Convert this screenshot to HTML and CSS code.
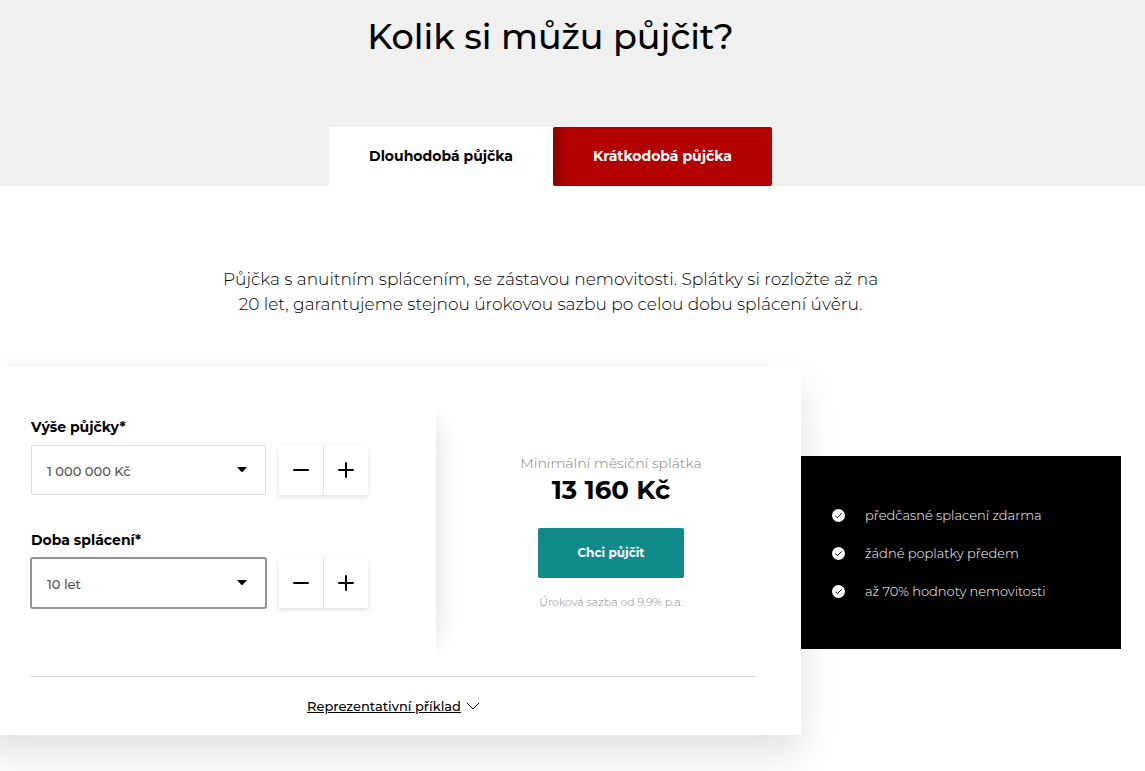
FILE: index.html
```html
<!DOCTYPE html>
<html lang="cs">

<head>
    <meta charset="UTF-8">
    <meta name="viewport" content="width=device-width, initial-scale=1">
    <title>Kolik si můžu půjčit?</title>
    <link rel="stylesheet" href="styles.css">
</head>

<body>
    <header class="intro">
        <h1>Kolik si můžu půjčit?</h1>
        <div class="tabs" role="tablist">
            <button type="button" class="tab tab-active" role="tab" aria-selected="true">Dlouhodobá půjčka</button>
            <button type="button" class="tab" role="tab" aria-selected="false">Krátkodobá půjčka</button>
        </div>
    </header>

    <main class="content">
        <p class="lead">Půjčka s anuitním splácením, se zástavou nemovitosti. Splátky si rozložte až na 20&nbsp;let, garantujeme stejnou úrokovou sazbu po celou dobu splácení úvěru.</p>

        <div class="calculator">
            <form class="card">
                <div class="card-main">
                    <div class="fields">
                        <div class="field">
                            <label for="amount">Výše půjčky*</label>
                            <div class="field-row">
                                <div class="select-box">
                                    <select id="amount">
                                        <option>1 000 000 Kč</option>
                                    </select>
                                    <svg class="caret" width="10" height="5" viewBox="0 0 10 5"><path d="M0 0h10L6 4.6q-1 .8-2 0z"/></svg>
                                </div>
                                <div class="stepper">
                                    <button type="button" aria-label="Snížit částku"><svg width="16" height="16" viewBox="0 0 16 16"><path d="M1 8h14"/></svg></button>
                                    <button type="button" aria-label="Zvýšit částku"><svg width="16" height="16" viewBox="0 0 16 16"><path d="M1 8h14M8 1v14"/></svg></button>
                                </div>
                            </div>
                        </div>
                        <div class="field">
                            <label for="period">Doba splácení*</label>
                            <div class="field-row">
                                <div class="select-box select-focused">
                                    <select id="period">
                                        <option>10 let</option>
                                    </select>
                                    <svg class="caret" width="10" height="5" viewBox="0 0 10 5"><path d="M0 0h10L6 4.6q-1 .8-2 0z"/></svg>
                                </div>
                                <div class="stepper">
                                    <button type="button" aria-label="Zkrátit dobu"><svg width="16" height="16" viewBox="0 0 16 16"><path d="M1 8h14"/></svg></button>
                                    <button type="button" aria-label="Prodloužit dobu"><svg width="16" height="16" viewBox="0 0 16 16"><path d="M1 8h14M8 1v14"/></svg></button>
                                </div>
                            </div>
                        </div>
                    </div>

                    <div class="result">
                        <div class="result-label">Minimální měsíční splátka</div>
                        <div class="result-price">13 160 Kč</div>
                        <button type="button" class="btn">Chci půjčit</button>
                        <div class="result-note">Úroková sazba od 9.9% p.a.</div>
                    </div>
                </div>

                <div class="card-footer">
                    <a href="#priklad">Reprezentativní příklad</a>
                    <svg width="14" height="8" viewBox="0 0 14 8"><path d="M.8.8L7 7l6.2-6.2"/></svg>
                </div>
            </form>

            <ul class="benefits">
                <li><svg width="13" height="13" viewBox="0 0 13 13"><circle cx="6.5" cy="6.5" r="6.5"/><path d="M3.4 6.7l2 2 4.2-4.3"/></svg>předčasné splacení zdarma</li>
                <li><svg width="13" height="13" viewBox="0 0 13 13"><circle cx="6.5" cy="6.5" r="6.5"/><path d="M3.4 6.7l2 2 4.2-4.3"/></svg>žádné poplatky předem</li>
                <li><svg width="13" height="13" viewBox="0 0 13 13"><circle cx="6.5" cy="6.5" r="6.5"/><path d="M3.4 6.7l2 2 4.2-4.3"/></svg>až 70% hodnoty nemovitosti</li>
            </ul>
        </div>
    </main>
</body>

</html>
```

FILE: styles.css
```css
* {
    box-sizing: border-box;
}
body {
    margin: 0;
    background: #fff;
    color: #000;
    font-family: Montserrat, Inter, "Open Sans", sans-serif;
    font-size: 14px;
    line-height: 20px;
    overflow-x: hidden;
}
button, select {
    font-family: inherit;
    color: inherit;
}

/* header with tabs */
.intro {
    background: #f0f0f0;
    padding: 12px 44px 0 0;
    text-align: center;
}
h1 {
    margin: 0 0 65px;
    font-size: 35px;
    font-weight: 500;
    line-height: 50px;
}
.tabs {
    display: flex;
    justify-content: center;
}
.tab {
    height: 59px;
    padding: 0 40px 2px;
    border: 0;
    border-radius: 2px;
    background: #b30000;
    box-shadow: inset 14px 0 14px -10px rgba(0, 0, 0, 0.3);
    color: #fff;
    font-size: 14px;
    font-weight: 700;
}
.tab-active {
    background: #fff;
    box-shadow: none;
    border-radius: 2px 2px 0 0;
    color: #000;
}

.content {
    padding: 81px 44px 36px 0;
}
.lead {
    max-width: 680px;
    margin: 0 auto 50px;
    font-size: 17px;
    font-weight: 300;
    line-height: 25px;
    text-align: center;
}

/* calculator */
.calculator {
    display: flex;
    align-items: center;
    max-width: 1141px;
    margin: 0 -20px;
}
.card {
    flex: 1;
    padding: 36px 45px 0 51px;
    background: #fff;
    box-shadow: 0 20px 40px rgba(0, 0, 0, 0.12);
}
.card-main {
    display: flex;
}
.fields {
    width: 405px;
    padding: 14px 0 52px;
    box-shadow: 20px 0 25px -20px rgba(0, 0, 0, 0.15);
}
.field + .field {
    margin-top: 35px;
}
.field label {
    display: block;
    margin-bottom: 8px;
    font-size: 14px;
    font-weight: 700;
}
.field-row {
    display: flex;
    gap: 13px;
}
.select-box {
    position: relative;
    width: 235px;
}
.select-box select {
    display: block;
    width: 100%;
    height: 50px;
    padding: 2px 40px 0 15px;
    border: 1px solid #ddd;
    border-radius: 2px;
    background: #fff;
    color: #555;
    font-size: 13px;
    font-weight: 500;
    appearance: none;
}
.select-focused select {
    outline: 2px solid #949494;
    outline-offset: -1px;
}
.caret {
    position: absolute;
    top: 22px;
    right: 19px;
    pointer-events: none;
}
.stepper {
    display: flex;
    box-shadow: 0 2px 5px rgba(0, 0, 0, 0.12);
}
.stepper button {
    display: flex;
    align-items: center;
    justify-content: center;
    width: 44px;
    height: 50px;
    padding: 0;
    border: 0;
    background: #fff;
}
.stepper button + button {
    width: 45px;
    border-left: 1px solid #e5e5e5;
}
.stepper path {
    stroke: #000;
    stroke-width: 2;
    stroke-linecap: round;
}

.result {
    flex: 1;
    margin-left: 30px;
    padding-top: 50px;
    text-align: center;
}
.result-label {
    color: #808080;
    font-size: 14px;
    font-weight: 300;
}
.result-price {
    margin-bottom: 20px;
    font-size: 26px;
    font-weight: 700;
    line-height: 35px;
}
.btn {
    width: 146px;
    height: 50px;
    padding: 0 0 2px;
    border: 0;
    border-radius: 2px;
    background: #118a8c;
    color: #fff;
    font-size: 12px;
    font-weight: 700;
}
.result-note {
    margin-top: 14px;
    color: #8c8c8c;
    font-size: 11px;
    font-weight: 300;
}

.card-footer {
    display: flex;
    align-items: center;
    justify-content: center;
    gap: 5px;
    margin-top: 16px;
    padding: 19px 0;
    border-top: 1px solid #ddd;
    font-size: 13px;
    font-weight: 500;
}
.card-footer a {
    color: #000;
}
.card-footer path {
    fill: none;
    stroke: #000;
}

.benefits {
    position: relative;
    width: 320px;
    margin: 3px 0 0;
    padding: 49px 31px 48px;
    background: #000;
    color: #fff;
    font-size: 13px;
    font-weight: 300;
    list-style: none;
}
.benefits li {
    display: flex;
    align-items: center;
    gap: 20px;
}
.benefits li + li {
    margin-top: 18px;
}
.benefits circle {
    fill: #fff;
}
.benefits path {
    fill: none;
    stroke: #000;
}
```
